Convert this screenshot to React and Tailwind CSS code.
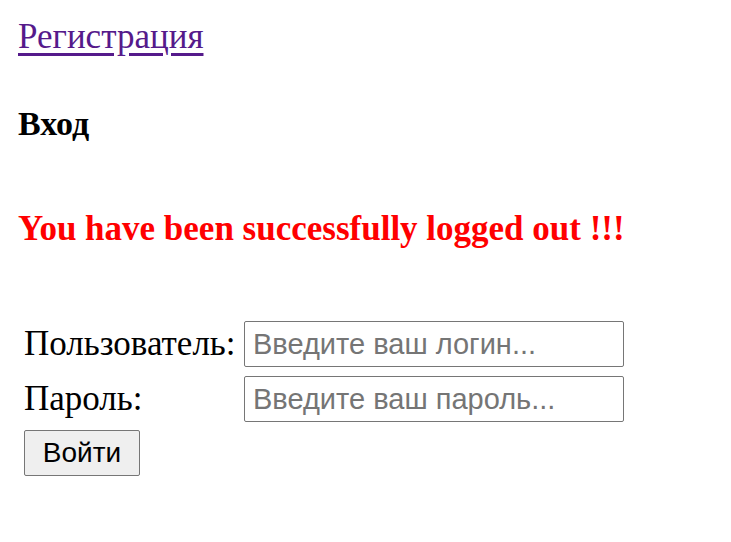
import React from 'react'

export default function App() {
  return (
    <div className="min-h-screen bg-white pl-[18px] pt-[18px] text-black" style={{ fontFamily: '"Liberation Serif", "Times New Roman", serif' }}>
      <a href="#" className="block w-fit text-[35px] leading-[38px] text-[#551a8b] underline underline-offset-[5px]">
        Регистрация
      </a>

      <h4 className="mt-[49px] text-[34px] font-bold leading-[38px]">Вход</h4>

      <h3 className="mt-[67px] text-[35px] font-bold leading-[38px] text-[#ff0000]">
        You have been successfully logged out !!!
      </h3>

      <form className="mt-[73px] pl-[6px]" onSubmit={e => e.preventDefault()}>
        <div className="grid grid-cols-[220px_380px] items-center gap-y-[9px]">
          <label className="text-[35px] leading-[38px]">Пользователь:</label>
          <input
            placeholder="Введите ваш логин..."
            className="h-[46px] w-[380px] rounded-[2px] border border-[#767676] px-[8px] text-[29px] placeholder:text-[#757575] focus:outline-none"
            style={{ fontFamily: '"Liberation Sans", Arial, sans-serif' }}
          />
          <label className="text-[35px] leading-[38px]">Пароль:</label>
          <input
            type="password"
            placeholder="Введите ваш пароль..."
            className="h-[46px] w-[380px] rounded-[2px] border border-[#767676] px-[8px] text-[29px] placeholder:text-[#757575] focus:outline-none"
            style={{ fontFamily: '"Liberation Sans", Arial, sans-serif' }}
          />
        </div>
        <button
          type="submit"
          className="mt-[8px] h-[46px] w-[116px] rounded-[2px] border border-[#767676] bg-[#efefef] text-[28px] text-black"
          style={{ fontFamily: '"Liberation Sans", Arial, sans-serif' }}
        >
          Войти
        </button>
      </form>
    </div>
  )
}
